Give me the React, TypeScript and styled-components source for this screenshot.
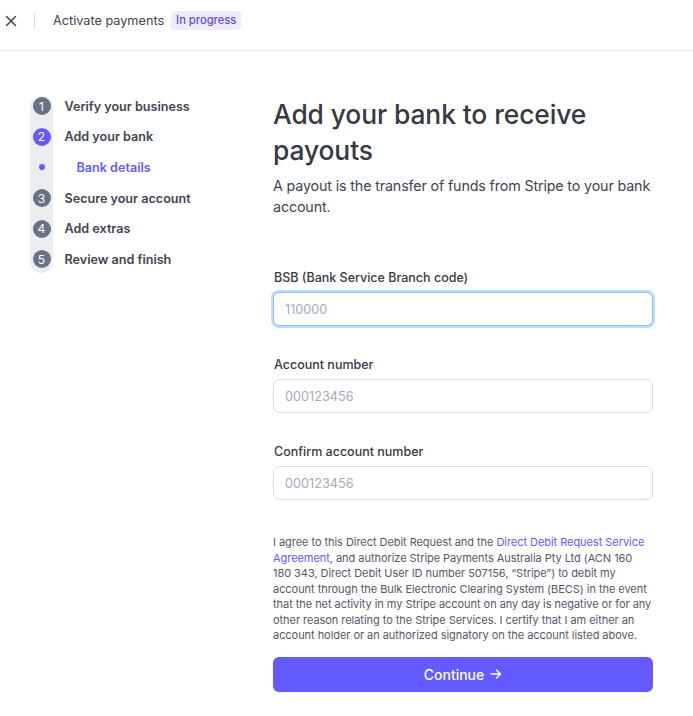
import React from "react";
import styled, { createGlobalStyle } from "styled-components";

const GlobalStyle = createGlobalStyle`
  html, body {
    margin: 0;
    padding: 0;
    background: #ffffff;
    font-family: Inter, "Noto Sans", sans-serif;
    -webkit-font-smoothing: antialiased;
  }
  * { box-sizing: border-box; }
`;

const Header = styled.header`
  height: 51px;
  display: flex;
  align-items: center;
  border-bottom: 1px solid #ebeef1;
  padding: 0 0 9px 4px;
`;

const CloseButton = styled.button`
  width: 14px;
  height: 14px;
  padding: 0;
  border: 0;
  background: none;
  display: flex;
  align-items: center;
  justify-content: center;
  color: #414552;
  cursor: pointer;
`;

const Divider = styled.div`
  width: 1px;
  height: 16px;
  background: #d5dbe1;
  margin: 0 18px 0 16px;
`;

const HeaderTitle = styled.span`
  font-size: 12.7px;
  color: #414552;
  margin-right: 7px;
`;

const Badge = styled.span`
  font-size: 11.2px;
  font-weight: 500;
  color: #5b50e8;
  background: #efedfd;
  border-radius: 4px;
  padding: 2px 5px 3px;
`;

const Body = styled.div`
  display: flex;
  padding: 45px 0 0 30px;
`;

const Steps = styled.ol`
  list-style: none;
  margin: 0;
  padding: 0;
  width: 243px;
  flex-shrink: 0;
  position: relative;
  display: flex;
  flex-direction: column;
  gap: 10.7px;

  &::before {
    content: "";
    position: absolute;
    left: 0;
    top: 0;
    width: 23px;
    height: 177px;
    border-radius: 12px;
    background: #ebeef1;
  }
`;

const Step = styled.li<{ $sub?: boolean }>`
  position: relative;
  display: flex;
  align-items: center;
  height: 20px;
  font-size: 12.6px;
  font-weight: 600;
  color: ${(p) => (p.$sub ? "#635bff" : "#414552")};
`;

const Marker = styled.span<{ $active?: boolean; $dot?: boolean }>`
  width: ${(p) => (p.$dot ? "6px" : "18px")};
  height: ${(p) => (p.$dot ? "6px" : "18px")};
  margin: ${(p) => (p.$dot ? "0 32px 0 8.5px" : "0 14px 0 2.5px")};
  border-radius: 50%;
  background: ${(p) => (p.$active || p.$dot ? "#635bff" : "#687385")};
  color: #ffffff;
  font-size: 12px;
  font-weight: 400;
  display: flex;
  align-items: center;
  justify-content: center;
  flex-shrink: 0;
`;

const Main = styled.main`
  width: 380px;
  display: flex;
  flex-direction: column;
`;

const Title = styled.h1`
  margin: 0;
  font-size: 26.4px;
  line-height: 36px;
  font-weight: 500;
  color: #353a44;
  letter-spacing: -0.1px;
`;

const Subtitle = styled.p`
  margin: 7px 0 53px;
  font-size: 14.3px;
  line-height: 21px;
  color: #414552;
  letter-spacing: -0.15px;
`;

const Field = styled.label<{ $last?: boolean }>`
  display: flex;
  flex-direction: column;
  margin-bottom: ${(p) => (p.$last ? "35px" : "31px")};
`;

const Label = styled.span`
  font-size: 12.5px;
  line-height: 16px;
  font-weight: 500;
  color: #353a44;
  margin-bottom: 6px;
  padding-left: 1px;
`;

const Input = styled.input<{ $focus?: boolean }>`
  height: 34px;
  border-radius: 6px;
  border: 1px solid ${(p) => (p.$focus ? "#8fbef5" : "#d8dee4")};
  box-shadow: ${(p) => (p.$focus ? "0 0 0 2px #bfdcfb" : "none")};
  padding: 0 11px;
  font-family: inherit;
  font-size: 12.7px;
  color: #353a44;
  outline: none;

  &::placeholder {
    color: #a3acba;
  }
`;

const Legal = styled.p`
  margin: 0 0 13px;
  font-size: 11px;
  line-height: 15.5px;
  color: #545969;
  letter-spacing: -0.05px;
`;

const Link = styled.a`
  color: #635bff;
  text-decoration: none;
`;

const ContinueButton = styled.button`
  height: 35px;
  border: 0;
  border-radius: 6px;
  background: #635bff;
  color: #ffffff;
  font-family: inherit;
  font-size: 14px;
  font-weight: 500;
  display: flex;
  align-items: center;
  justify-content: center;
  gap: 6px;
  cursor: pointer;
`;

const steps = [
  { n: "1", label: "Verify your business" },
  { n: "2", label: "Add your bank", active: true },
  { n: "", label: "Bank details", sub: true },
  { n: "3", label: "Secure your account" },
  { n: "4", label: "Add extras" },
  { n: "5", label: "Review and finish" },
];

export default function App() {
  return (
    <>
      <GlobalStyle />
      <Header>
        <CloseButton aria-label="Close">
          <svg width="12" height="12" viewBox="0 0 12 12">
            <path d="M1.5 1.5l9 9M10.5 1.5l-9 9" stroke="currentColor" strokeWidth="1.5" strokeLinecap="round" />
          </svg>
        </CloseButton>
        <Divider />
        <HeaderTitle>Activate payments</HeaderTitle>
        <Badge>In progress</Badge>
      </Header>
      <Body>
        <Steps>
          {steps.map((s) => (
            <Step key={s.label} $sub={s.sub}>
              <Marker $active={s.active} $dot={s.sub}>
                {s.n}
              </Marker>
              {s.label}
            </Step>
          ))}
        </Steps>
        <Main>
          <Title>Add your bank to receive payouts</Title>
          <Subtitle>A payout is the transfer of funds from Stripe to your bank account.</Subtitle>
          <Field>
            <Label>BSB (Bank Service Branch code)</Label>
            <Input $focus placeholder="110000" />
          </Field>
          <Field>
            <Label>Account number</Label>
            <Input placeholder="000123456" />
          </Field>
          <Field $last>
            <Label>Confirm account number</Label>
            <Input placeholder="000123456" />
          </Field>
          <Legal>
            I agree to this Direct Debit Request and the{" "}
            <Link href="#">Direct Debit Request Service Agreement</Link>, and authorize Stripe Payments
            Australia Pty Ltd (ACN 160 180 343, Direct Debit User ID number 507156, “Stripe”) to debit my
            account through the Bulk Electronic Clearing System (BECS) in the event that the net activity in
            my Stripe account on any day is negative or for any other reason relating to the Stripe Services.
            I certify that I am either an account holder or an authorized signatory on the account listed
            above.
          </Legal>
          <ContinueButton>
            Continue
            <svg width="12" height="12" viewBox="0 0 12 12">
              <path d="M1 6h9.5M6.5 2l4 4-4 4" stroke="currentColor" strokeWidth="1.4" fill="none" strokeLinecap="round" strokeLinejoin="round" />
            </svg>
          </ContinueButton>
        </Main>
      </Body>
    </>
  );
}
